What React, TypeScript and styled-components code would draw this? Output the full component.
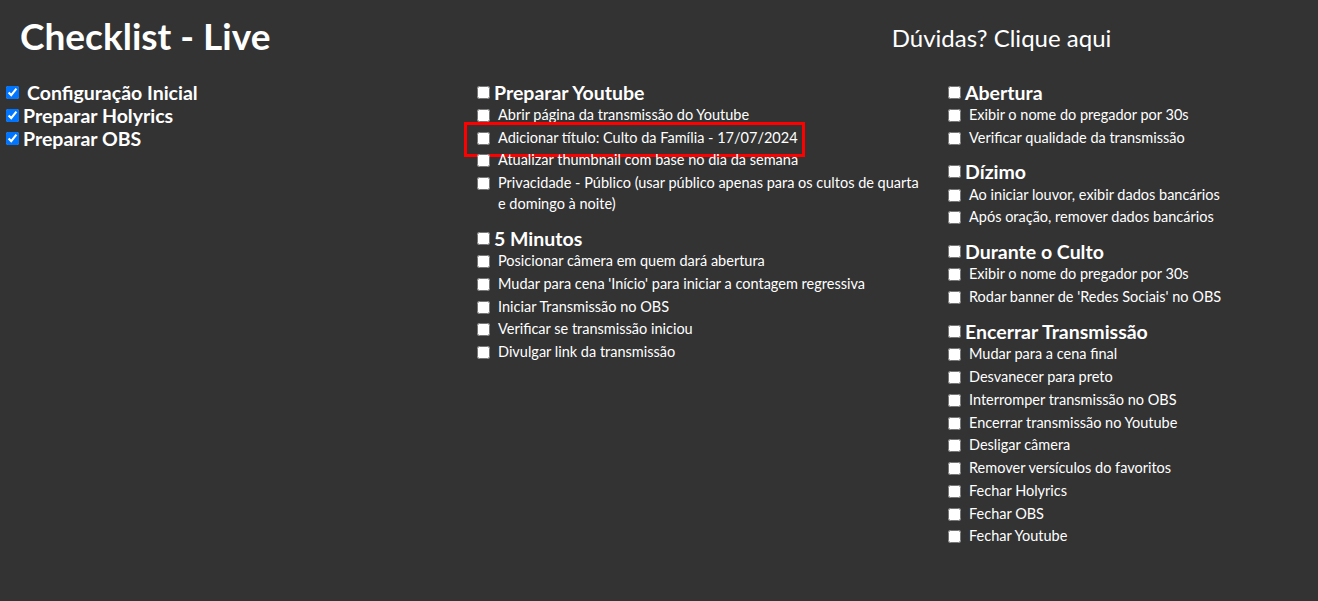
import React from "react";
import styled, { createGlobalStyle } from "styled-components";

const GlobalStyle = createGlobalStyle`
  html, body { margin: 0; padding: 0; background: #333333; }
  body { font-family: Lato, "Open Sans", sans-serif; color: #ffffff; }
  * { box-sizing: border-box; }
`;

const Page = styled.div`
  min-height: 601px;
  background: #333333;
`;

const Header = styled.header`
  display: grid;
  grid-template-columns: 1fr 1fr;
  align-items: center;
  height: 75px;
`;

const Title = styled.h1`
  margin: 0;
  padding-left: 20px;
  padding-bottom: 4px;
  font-size: 37px;
  font-weight: 700;
  line-height: 1;
`;

const HelpLink = styled.a`
  justify-self: center;
  margin-left: 26px;
  font-size: 24px;
  color: #ffffff;
  text-decoration: none;
  cursor: pointer;
`;

const Columns = styled.main`
  display: grid;
  grid-template-columns: 471px 471px 1fr;
  padding-left: 2px;
  padding-top: 6px;
`;

const Column = styled.section`
  display: flex;
  flex-direction: column;
`;

const Group = styled.div`
  display: flex;
  flex-direction: column;
  margin-bottom: 12.3px;
`;

const Box = styled.input.attrs({ type: "checkbox" })`
  width: 13px;
  height: 13px;
  margin: 0 4px 0 4px;
  flex: none;
`;

const Heading = styled.label<{ $indent?: number; $tall?: boolean }>`
  display: flex;
  align-items: center;
  height: ${(p) => (p.$tall ? 23 : 22)}px;
  font-size: 19.5px;
  font-weight: 700;
  & > span { padding-left: ${(p) => p.$indent ?? 0}px; }
`;

const Item = styled.label<{ $marked?: boolean }>`
  position: relative;
  display: flex;
  align-items: flex-start;
  font-size: 14.5px;
  line-height: 21px;
  padding: 0.875px 0;
  & > input { margin-top: 5px; margin-right: 8px; }
  ${(p) =>
    p.$marked
      ? `&::after {
          content: "";
          position: absolute;
          left: -9px;
          top: -3.5px;
          width: 335px;
          height: 29px;
          border: 3px solid #ff0000;
          pointer-events: none;
        }`
      : ""}
`;

const ItemText = styled.span`
  max-width: 430px;
`;

type Section = { title: string; items: string[] };

const middle: Section[] = [
  {
    title: "Preparar Youtube",
    items: [
      "Abrir página da transmissão do Youtube",
      "Adicionar título: Culto da Família - 17/07/2024",
      "Atualizar thumbnail com base no dia da semana",
      "Privacidade - Público (usar público apenas para os cultos de quarta e domingo à noite)",
    ],
  },
  {
    title: "5 Minutos",
    items: [
      "Posicionar câmera em quem dará abertura",
      "Mudar para cena 'Início' para iniciar a contagem regressiva",
      "Iniciar Transmissão no OBS",
      "Verificar se transmissão iniciou",
      "Divulgar link da transmissão",
    ],
  },
];

const right: Section[] = [
  {
    title: "Abertura",
    items: ["Exibir o nome do pregador por 30s", "Verificar qualidade da transmissão"],
  },
  {
    title: "Dízimo",
    items: ["Ao iniciar louvor, exibir dados bancários", "Após oração, remover dados bancários"],
  },
  {
    title: "Durante o Culto",
    items: ["Exibir o nome do pregador por 30s", "Rodar banner de 'Redes Sociais' no OBS"],
  },
  {
    title: "Encerrar Transmissão",
    items: [
      "Mudar para a cena final",
      "Desvanecer para preto",
      "Interromper transmissão no OBS",
      "Encerrar transmissão no Youtube",
      "Desligar câmera",
      "Remover versículos do favoritos",
      "Fechar Holyrics",
      "Fechar OBS",
      "Fechar Youtube",
    ],
  },
];

const SectionBlock: React.FC<{ s: Section }> = ({ s }) => (
  <Group>
    <Heading>
      <Box />
      <span>{s.title}</span>
    </Heading>
    {s.items.map((it) => (
      <Item key={it} $marked={it.startsWith("Adicionar título")}>
        <Box />
        <ItemText>{it}</ItemText>
      </Item>
    ))}
  </Group>
);

export default function App() {
  return (
    <Page>
      <GlobalStyle />
      <Header>
        <Title>Checklist - Live</Title>
        <HelpLink>Dúvidas? Clique aqui</HelpLink>
      </Header>
      <Columns>
        <Column>
          <Heading $indent={4} $tall>
            <Box defaultChecked />
            <span>Configuração Inicial</span>
          </Heading>
          <Heading $tall>
            <Box defaultChecked />
            <span>Preparar Holyrics</span>
          </Heading>
          <Heading $tall>
            <Box defaultChecked />
            <span>Preparar OBS</span>
          </Heading>
        </Column>
        <Column>
          {middle.map((s) => (
            <SectionBlock key={s.title} s={s} />
          ))}
        </Column>
        <Column>
          {right.map((s) => (
            <SectionBlock key={s.title} s={s} />
          ))}
        </Column>
      </Columns>
    </Page>
  );
}
